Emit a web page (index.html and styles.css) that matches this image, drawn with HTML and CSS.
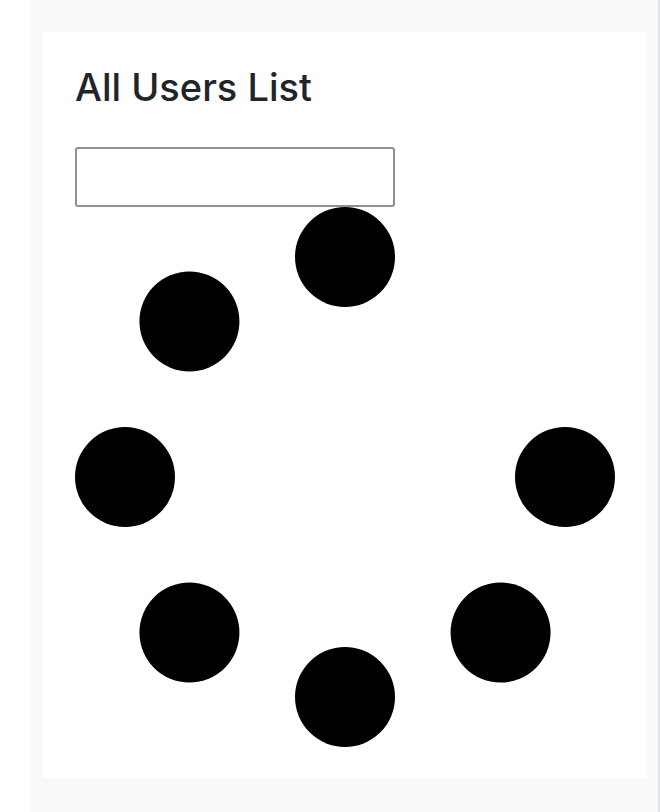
FILE: index.html
```html
<!DOCTYPE html>
<html lang="en">
<head>
  <meta charset="UTF-8" />
  <meta name="viewport" content="width=device-width, initial-scale=1" />
  <title>All Users List</title>
  <link rel="stylesheet" href="styles.css">
</head>
<body>

<div class="page">
  <main class="card">
    <h2>All Users List</h2>
    <input type="text" class="search" />

    <div class="spinner">
      <span class="dot"></span>
      <span class="dot"></span>
      <span class="dot"></span>
      <span class="dot"></span>
      <span class="dot"></span>
      <span class="dot"></span>
      <span class="dot"></span>
    </div>
  </main>
</div>

</body>
</html>
```

FILE: styles.css
```css
body { margin: 0; background: white; font-family: Inter, "Noto Sans", Arial, sans-serif; }
.page {
  margin-left: 30px; min-height: 100vh; box-sizing: border-box;
  padding: 32px 11px 32px 13px; background: #f8f9fa; border-right: 2px solid #dee2e6;
}
.card { background: white; padding: 32px 32px 31px 32px; }
h2 { margin: 2px 0 38px; font-size: 38px; line-height: 43px; font-weight: 500; color: #212529; }
.search {
  display: block; width: 320px; height: 60px; box-sizing: border-box; margin: 0;
  border: 2px solid #908e9b; border-radius: 3px; background: white; padding: 0 10px;
}
.spinner { position: relative; width: 540px; height: 540px; }
.dot {
  position: absolute; left: 220px; top: 220px; width: 100px; height: 100px;
  border-radius: 50%; background: #000;
}
.dot:nth-child(1) { transform: rotate(0deg) translateY(-220px); }
.dot:nth-child(2) { transform: rotate(90deg) translateY(-220px); }
.dot:nth-child(3) { transform: rotate(135deg) translateY(-220px); }
.dot:nth-child(4) { transform: rotate(180deg) translateY(-220px); }
.dot:nth-child(5) { transform: rotate(225deg) translateY(-220px); }
.dot:nth-child(6) { transform: rotate(270deg) translateY(-220px); }
.dot:nth-child(7) { transform: rotate(315deg) translateY(-220px); }
```
